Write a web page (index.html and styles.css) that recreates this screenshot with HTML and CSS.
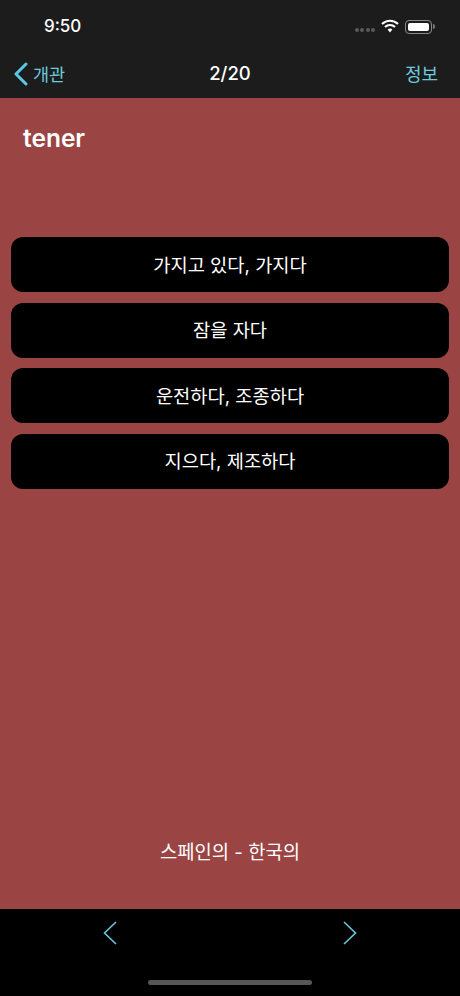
FILE: index.html
```html
<!DOCTYPE html>
<html lang="ko">
<head>
<meta charset="utf-8">
<title>tener</title>
<link rel="stylesheet" href="styles.css">
</head>
<body>
<div class="phone">
  <header class="top">
    <div class="status">
      <span class="time">9:50</span>
      <div class="status-icons">
        <div class="signal"><i></i><i></i><i></i><i></i></div>
        <svg class="wifi" width="18" height="14" viewBox="0 0 18 14"><path d="M1 5 A11.5 11.5 0 0 1 17 5" fill="none" stroke="#fff" stroke-width="2.2"/><path d="M4 8 A7.2 7.2 0 0 1 14 8" fill="none" stroke="#fff" stroke-width="2.2"/><path d="M6.6 10.6 A3.4 3.4 0 0 1 11.4 10.6 L9 13.4 Z" fill="#fff"/></svg>
        <div class="battery"><div class="battery-fill"></div></div>
        <div class="battery-cap"></div>
      </div>
    </div>
    <nav class="nav">
      <div class="back">
        <svg width="15" height="24" viewBox="0 0 15 24"><path d="M13 2 L3 12 L13 22" fill="none" stroke="#5ac8e6" stroke-width="3" stroke-linecap="round" stroke-linejoin="round"/></svg>
        <span>개관</span>
      </div>
      <div class="count">2/20</div>
      <div class="info">정보</div>
    </nav>
  </header>
  <main class="content">
    <h1 class="word">tener</h1>
    <div class="answers">
      <button class="answer">가지고 있다, 가지다</button>
      <button class="answer">잠을 자다</button>
      <button class="answer">운전하다, 조종하다</button>
      <button class="answer">지으다, 제조하다</button>
    </div>
    <p class="lang">스페인의 - 한국의</p>
  </main>
  <footer class="bottom">
    <div class="arrows">
      <svg width="14" height="24" viewBox="0 0 14 24"><path d="M13 1 L1.5 12 L13 23" fill="none" stroke="#6cc5dc" stroke-width="1.6"/></svg>
      <svg width="14" height="24" viewBox="0 0 14 24"><path d="M1 1 L12.5 12 L1 23" fill="none" stroke="#6cc5dc" stroke-width="1.6"/></svg>
    </div>
    <div class="home"></div>
  </footer>
</div>
</body>
</html>
```
FILE: styles.css
```css
* { box-sizing: border-box; }
html, body { margin: 0; padding: 0; }
body { width: 460px; height: 996px; overflow: hidden; background: #000; }
.phone {
  width: 460px; height: 996px; display: flex; flex-direction: column;
  font-family: Inter, "Noto Sans CJK KR", sans-serif; color: #fff;
}
.top { height: 98px; background: #1c1c1c; flex: none; }
.status { height: 50px; display: flex; justify-content: space-between; align-items: center; padding: 2px 25px 0 44px; }
.time { font-size: 17px; font-weight: 500; }
.status-icons { display: flex; align-items: center; }
.signal { display: flex; gap: 1.5px; margin-top: 8px; margin-right: 6px; }
.signal i { width: 4px; height: 4px; border-radius: 50%; background: #5a5a5a; }
.wifi { margin-right: 6px; margin-top: -1px; }
.battery { width: 27px; height: 14px; border: 1px solid #8a8a8a; border-radius: 4px; padding: 2px; margin-top: 1px; }
.battery-fill { width: 100%; height: 100%; background: #fff; border-radius: 2px; }
.battery-cap { width: 2px; height: 5px; margin-left: 1px; margin-top: 1px; background: #777; border-radius: 0 2px 2px 0; }
.nav { height: 48px; display: flex; align-items: center; justify-content: space-between; position: relative; padding: 0 22px 2px 13px; }
.back { display: flex; align-items: center; gap: 5px; font-size: 17.5px; color: #6ccbdc; }
.back svg { margin-top: 1px; }
.count { font-size: 18.5px; font-weight: 500; position: absolute; left: 0; right: 0; text-align: center; }
.info { font-size: 18px; color: #6ccbdc; }
.content { flex: 1; background: #9b4444; display: flex; flex-direction: column; padding: 0 11px; }
.word { margin: 24px 0 0 12px; font-size: 24.5px; line-height: 32px; font-weight: 600; height: 115px; }
.answers { display: flex; flex-direction: column; gap: 10.67px; }
.answer {
  height: 55px; border: 0; border-radius: 12px; background: #000; color: #fff;
  font: 400 18.7px Inter, "Noto Sans CJK KR", sans-serif; text-align: center; padding: 0 0 3px;
}
.lang { margin: auto 0 43px; text-align: center; font-size: 18.8px; line-height: 26px; }
.bottom { height: 87px; background: #000; flex: none; display: flex; flex-direction: column; align-items: center; }
.arrows { width: 460px; display: flex; justify-content: space-between; padding: 12px 103px 0 103px; }
.home { width: 164px; height: 5px; border-radius: 3px; background: #565656; margin-top: 35px; }
```
